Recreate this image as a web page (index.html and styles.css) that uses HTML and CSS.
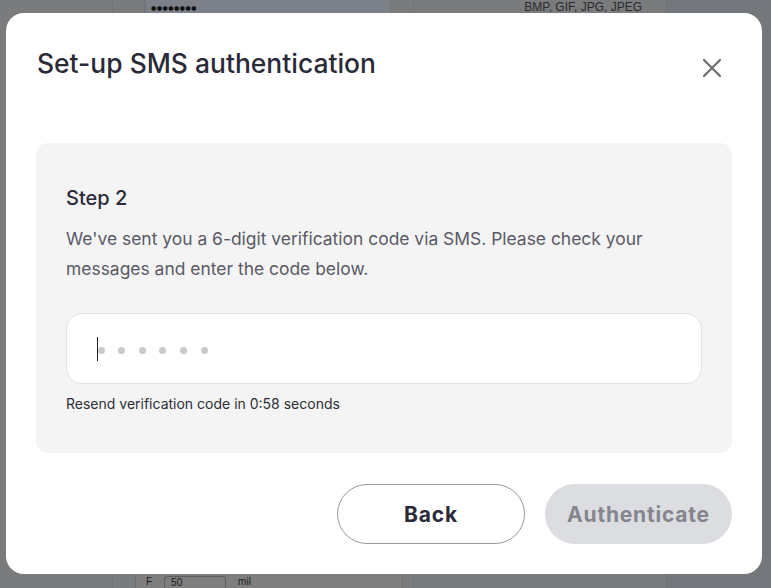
FILE: index.html
```html
<!DOCTYPE html>
<html lang="en">
<head>
<meta charset="utf-8">
<title>Set-up SMS authentication</title>
<link rel="stylesheet" href="styles.css">
</head>
<body>
<div class="page">
  <div class="col col-a"></div>
  <div class="col col-b">
    <div class="pw">●●●●●●●●</div>
  </div>
  <div class="col col-c">
    <div class="formats">BMP, GIF, JPG, JPEG</div>
  </div>
  <div class="col col-d"></div>
  <div class="bottom-row">
    <span class="lbl">F</span><span class="mini-input">50</span><span class="lbl">mil</span>
  </div>
</div>

<div class="overlay">
  <div class="modal">
    <div class="modal-head">
      <h1 class="title">Set-up SMS authentication</h1>
      <button class="close" aria-label="Close">
        <svg width="20" height="20" viewBox="0 0 20 20"><path d="M2 2 L18 18 M18 2 L2 18" stroke="#6f6f73" stroke-width="2.2" stroke-linecap="round" fill="none"/></svg>
      </button>
    </div>
    <div class="panel">
      <h2 class="step">Step 2</h2>
      <p class="desc">We've sent you a 6-digit verification code via SMS. Please check your messages and enter the code below.</p>
      <div class="code-input">
        <span class="caret"></span>
        <span class="dot"></span><span class="dot"></span><span class="dot"></span><span class="dot"></span><span class="dot"></span><span class="dot"></span>
      </div>
      <p class="resend">Resend verification code in 0:58 seconds</p>
    </div>
    <div class="actions">
      <button class="btn btn-back">Back</button>
      <button class="btn btn-auth" disabled>Authenticate</button>
    </div>
  </div>
</div>
</body>
</html>
```

FILE: styles.css
```css
* { box-sizing: border-box; }
html, body { margin: 0; padding: 0; }
body {
  width: 771px;
  height: 588px;
  overflow: hidden;
  background: #7a7b7d;
  font-family: "Inter", "Noto Sans", sans-serif;
  position: relative;
}

/* dimmed page behind */
.page {
  display: flex;
  height: 588px;
  padding-left: 112px;
  position: relative;
}
.col { height: 100%; }
.col-a { width: 33px; border-left: 1px solid #727478; border-right: 1px solid #72757c; }
.col-b {
  width: 246px;
  background: #7c8089;
  border-left: 1px solid #6f737a;
  border-right: 1px solid #6f737a;
  padding: 3px 0 0 5px;
}
.pw { font-family: "DejaVu Sans", sans-serif; font-size: 6px; line-height: 10px; color: #111; letter-spacing: 0.5px; }
.col-c {
  width: 254px;
  margin-left: 22px;
  border-left: 1px solid #70737a;
  border-right: 1px solid #70737a;
  text-align: right;
  padding-right: 24px;
}
.formats { font-family: "Liberation Sans", sans-serif; font-size: 12px; color: #2a2b30; line-height: 12px; padding-top: 1px; }
.col-d { flex: 1; background: #74777b; }
.bottom-row {
  position: absolute;
  left: 135px;
  top: 574px;
  width: 268px;
  height: 14px;
  background: #7e7e7e;
  border-left: 1px solid #6d6f73;
  border-right: 1px solid #6d6f73;
  display: flex;
  gap: 12px;
  padding: 2px 0 0 10px;
  font-family: "Liberation Sans", sans-serif;
  font-size: 10px;
  line-height: 11px;
  color: #1c1c1c;
}
.mini-input { width: 62px; height: 14px; border: 1px solid #5e5e5e; border-bottom: 0; border-radius: 4px 4px 0 0; padding-left: 6px; }

/* modal */
.overlay {
  position: absolute;
  inset: 0;
  padding: 13px 9px 14px 6px;
}
.modal {
  width: 756px;
  height: 561px;
  background: #fff;
  border-radius: 18px;
  padding: 30px;
  display: flex;
  flex-direction: column;
}
.modal-head {
  display: flex;
  justify-content: space-between;
  align-items: flex-start;
  height: 100px;
}
.title {
  margin: 0;
  padding: 2px 0 0 1px;
  font-size: 26.45px;
  line-height: 36px;
  font-weight: 500;
  color: #2a2a38;
}
.close {
  border: 0;
  background: none;
  padding: 0;
  margin: 15px 10px 0 0;
  width: 20px;
  height: 20px;
  cursor: pointer;
}
.close svg { display: block; }

.panel {
  background: #f4f4f4;
  border-radius: 12px;
  padding: 40px 30px 30px 30px;
  height: 310px;
}
.step {
  margin: 0;
  font-size: 20px;
  line-height: 30px;
  font-weight: 500;
  color: #2a2a38;
}
.desc {
  margin: 11px 0 0 0;
  font-size: 17.45px;
  line-height: 30px;
  color: #5a5a66;
  max-width: 610px;
}
.code-input {
  margin-top: 29px;
  height: 71px;
  background: #fff;
  border: 1px solid #e2e2e4;
  border-radius: 16px;
  display: flex;
  align-items: center;
  padding: 3px 0 0 30px;
  gap: 13.6px;
}
.caret { width: 1px; height: 24px; background: #222; margin: -3px -14px 0 0; }
.dot { width: 7px; height: 7px; border-radius: 50%; background: #c9c9cd; }
.resend {
  margin: 11px 0 0 0;
  font-size: 14px;
  line-height: 18px;
  color: #2e2e36;
}

.actions {
  margin-top: 31px;
  display: flex;
  justify-content: flex-end;
  gap: 20px;
}
.btn {
  height: 60px;
  border-radius: 30px;
  font-family: inherit;
  font-size: 21px;
  font-weight: 700;
  letter-spacing: 0.8px;
}
.btn-back {
  width: 188px;
  background: #fff;
  border: 1px solid #98989e;
  color: #2a2a38;
}
.btn-auth {
  width: 187px;
  background: #dcdde1;
  border: 0;
  color: #85858f;
}
```
